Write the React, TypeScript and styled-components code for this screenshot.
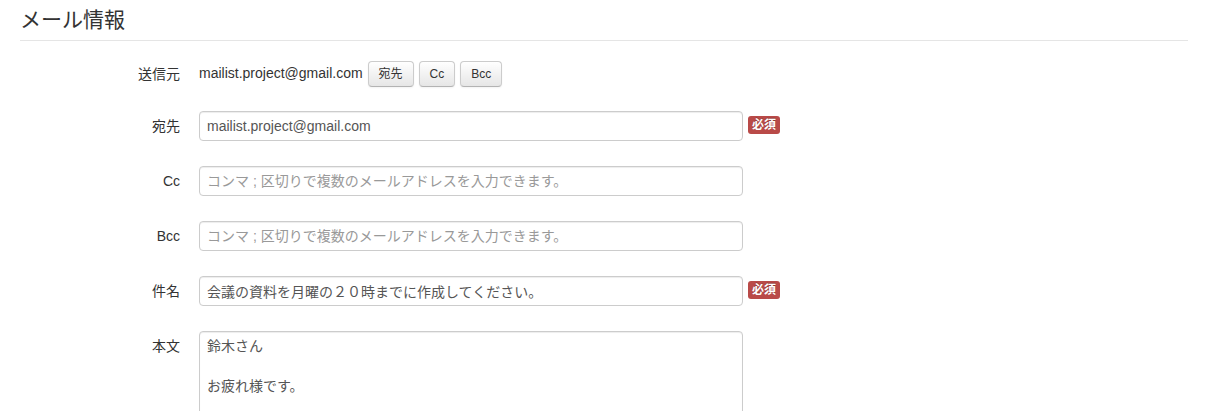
import React from "react";
import styled, { createGlobalStyle } from "styled-components";

const GlobalStyle = createGlobalStyle`
  html, body { margin: 0; padding: 0; background: #fff; }
  body {
    font-family: "Liberation Sans", "Noto Sans CJK JP", sans-serif;
    font-size: 14px;
    line-height: 20px;
    color: #333;
  }
  * { box-sizing: border-box; }
`;

const Page = styled.div`
  padding: 0 23px 0 20px;
`;

const Legend = styled.h2`
  margin: 0;
  font-size: 21px;
  font-weight: normal;
  line-height: 40px;
  color: #333;
  border-bottom: 1px solid #e5e5e5;
`;

const Form = styled.form`
  display: flex;
  flex-direction: column;
  padding-top: 18px;
`;

const Row = styled.div<{ $gap: number }>`
  display: flex;
  align-items: center;
  min-height: 30px;
  margin-bottom: ${(p) => p.$gap}px;
`;

const TopRow = styled(Row)`
  align-items: flex-start;
`;

const Label = styled.label`
  width: 160px;
  flex: none;
  text-align: right;
  margin-right: 19px;
  color: #333;
`;

const TopLabel = styled(Label)`
  padding-top: 5px;
`;

const Controls = styled.div`
  display: flex;
  align-items: center;
  gap: 5px;
`;

const StaticText = styled.span`
  line-height: 20px;
  margin-top: -3px;
`;

const SmallButton = styled.button`
  font-family: inherit;
  font-size: 12px;
  line-height: 20px;
  height: 26px;
  padding: 2px 10px;
  color: #333;
  background: linear-gradient(to bottom, #ffffff, #e6e6e6);
  border: 1px solid #cccccc;
  border-bottom-color: #b3b3b3;
  border-radius: 4px;
  box-shadow: inset 0 1px 0 rgba(255, 255, 255, 0.2), 0 1px 2px rgba(0, 0, 0, 0.05);
  cursor: pointer;
`;

const TextInput = styled.input`
  width: 544px;
  height: 30px;
  padding: 4px 7px;
  font-family: inherit;
  font-size: 14px;
  line-height: 20px;
  color: #555;
  background: #fff;
  border: 1px solid #ccc;
  border-radius: 4px;
  box-shadow: inset 0 1px 1px rgba(0, 0, 0, 0.075);
  outline: none;
  &::placeholder { color: #999; }
`;

const TextArea = styled.textarea`
  width: 544px;
  height: 200px;
  padding: 4px 7px;
  font-family: inherit;
  font-size: 14px;
  line-height: 20px;
  color: #555;
  background: #fff;
  border: 1px solid #ccc;
  border-radius: 4px;
  box-shadow: inset 0 1px 1px rgba(0, 0, 0, 0.075);
  resize: none;
  outline: none;
`;

const Badge = styled.span`
  display: inline-block;
  margin-left: 0px;
  padding: 0 4px;
  height: 18px;
  font-size: 12px;
  font-weight: bold;
  line-height: 18px;
  color: #fff;
  background: #b94a48;
  border-radius: 3px;
  text-shadow: 0 -1px 0 rgba(0, 0, 0, 0.25);
  margin-top: -2px;
`;

const placeholder = "コンマ ; 区切りで複数のメールアドレスを入力できます。";

export default function App() {
  return (
    <Page>
      <GlobalStyle />
      <Legend>メール情報</Legend>
      <Form onSubmit={(e) => e.preventDefault()}>
        <Row $gap={22}>
          <Label>送信元</Label>
          <Controls>
            <StaticText>mailist.project@gmail.com</StaticText>
            <SmallButton type="button">宛先</SmallButton>
            <SmallButton type="button">Cc</SmallButton>
            <SmallButton type="button">Bcc</SmallButton>
          </Controls>
        </Row>
        <Row $gap={25}>
          <Label>宛先</Label>
          <Controls>
            <TextInput defaultValue="mailist.project@gmail.com" />
            <Badge>必須</Badge>
          </Controls>
        </Row>
        <Row $gap={25}>
          <Label>Cc</Label>
          <Controls>
            <TextInput placeholder={placeholder} />
          </Controls>
        </Row>
        <Row $gap={25}>
          <Label>Bcc</Label>
          <Controls>
            <TextInput placeholder={placeholder} />
          </Controls>
        </Row>
        <Row $gap={25}>
          <Label>件名</Label>
          <Controls>
            <TextInput defaultValue="会議の資料を月曜の２０時までに作成してください。" />
            <Badge>必須</Badge>
          </Controls>
        </Row>
        <TopRow $gap={25}>
          <TopLabel>本文</TopLabel>
          <Controls>
            <TextArea defaultValue={"鈴木さん\n\nお疲れ様です。\n\n"} />
          </Controls>
        </TopRow>
      </Form>
    </Page>
  );
}
